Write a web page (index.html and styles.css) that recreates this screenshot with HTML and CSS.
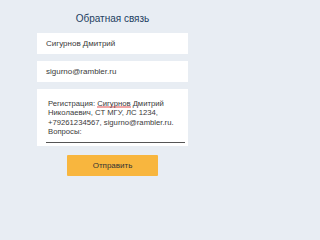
FILE: index.html
```html
<!DOCTYPE html>
<html lang="ru">
<head>
<meta charset="utf-8">
<link rel="stylesheet" href="styles.css">
</head>
<body>
<form class="feedback">
  <h1 class="title">Обратная связь</h1>
  <div class="field">Сигурнов Дмитрий</div>
  <div class="field">sigurno@rambler.ru</div>
  <div class="area">
    <div class="area-text">Регистрация: <span class="misspelled">Сигурнов</span> Дмитрий<br>Николаевич, СТ МГУ, ЛС 1234,<br>+79261234567, sigurno@rambler.ru.<br>Вопросы:</div>
  </div>
  <div class="actions"><button type="button" class="send">Отправить</button></div>
</form>
</body>
</html>
```
FILE: styles.css
```css
html, body {
  margin: 0;
  padding: 0;
  background: #e8edf3;
  height: 100%;
}
body {
  font-family: "Liberation Sans", Arial, sans-serif;
  color: #333;
}
.feedback {
  width: 151px;
  margin-left: 37px;
  padding-top: 12px;
  display: flex;
  flex-direction: column;
}
.title {
  margin: 0 0 8px;
  font-size: 10px;
  line-height: 13px;
  font-weight: normal;
  text-align: center;
  color: #22405f;
}
.field {
  height: 21px;
  line-height: 21px;
  background: #fff;
  padding-left: 9px;
  font-size: 8px;
  color: #3a3a3a;
  margin-bottom: 7px;
}
.area {
  background: #fff;
  height: 57px;
  padding: 10px 3px 0 9px;
  box-sizing: border-box;
}
.area-text {
  font-size: 7.7px;
  line-height: 9.4px;
  color: #3a3a3a;
  padding-left: 2px;
  height: 43px;
  border-bottom: 1px solid #555;
  white-space: nowrap;
}
.misspelled {
  background-image: radial-gradient(circle, #e04040 0.6px, transparent 0.8px);
  background-size: 2px 2px;
  background-repeat: repeat-x;
  background-position: 0 100%;
}
.actions {
  display: flex;
  justify-content: center;
  margin-top: 9px;
}
.send {
  width: 91px;
  height: 21px;
  border: 0;
  border-radius: 1px;
  background: #f8b63e;
  font-family: "Liberation Sans", Arial, sans-serif;
  font-size: 8px;
  color: #333;
  padding: 0;
}
```
